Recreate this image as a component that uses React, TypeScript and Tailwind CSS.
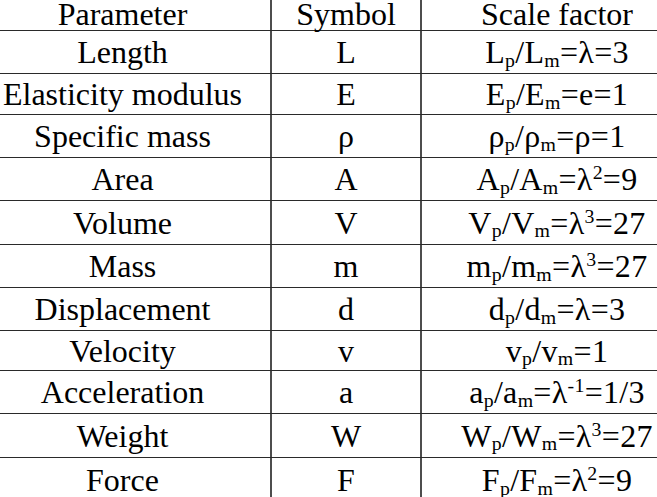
import React from "react";

const Sb = ({ c }: { c: string }) => (
  <span className="relative top-[0.2em] text-[0.62em] leading-none">{c}</span>
);
const Sp = ({ c }: { c: string }) => (
  <span className="relative top-[-0.55em] text-[0.62em] leading-none">{c}</span>
);

type Row = { p: string; s: string; f: React.ReactNode; h: string };

const rows: Row[] = [
  { p: "Length", s: "L", h: "h-[43px]", f: (<>L<Sb c="p" />/L<Sb c="m" />=λ=3</>) },
  { p: "Elasticity modulus", s: "E", h: "h-[41px]", f: (<>E<Sb c="p" />/E<Sb c="m" />=e=1</>) },
  { p: "Specific mass", s: "ρ", h: "h-[43px]", f: (<>ρ<Sb c="p" />/ρ<Sb c="m" />=ρ=1</>) },
  { p: "Area", s: "A", h: "h-[43px]", f: (<>A<Sb c="p" />/A<Sb c="m" />=λ<Sp c="2" />=9</>) },
  { p: "Volume", s: "V", h: "h-[44px]", f: (<>V<Sb c="p" />/V<Sb c="m" />=λ<Sp c="3" />=27</>) },
  { p: "Mass", s: "m", h: "h-[43px]", f: (<>m<Sb c="p" />/m<Sb c="m" />=λ<Sp c="3" />=27</>) },
  { p: "Displacement", s: "d", h: "h-[43px]", f: (<>d<Sb c="p" />/d<Sb c="m" />=λ=3</>) },
  { p: "Velocity", s: "v", h: "h-[40px]", f: (<>v<Sb c="p" />/v<Sb c="m" />=1</>) },
  { p: "Acceleration", s: "a", h: "h-[43px]", f: (<>a<Sb c="p" />/a<Sb c="m" />=λ<Sp c="-1" />=1/3</>) },
  { p: "Weight", s: "W", h: "h-[44px]", f: (<>W<Sb c="p" />/W<Sb c="m" />=λ<Sp c="3" />=27</>) },
  { p: "Force", s: "F", h: "h-[44px]", f: (<>F<Sb c="p" />/F<Sb c="m" />=λ<Sp c="2" />=9</>) },
];

function Line({
  a,
  b,
  c,
  h,
  last,
  head,
}: {
  a: React.ReactNode;
  b: React.ReactNode;
  c: React.ReactNode;
  h: string;
  last?: boolean;
  head?: boolean;
}) {
  const rowCls = `flex ${h} ${last ? "" : "border-b border-[#2a2a2a]"}`;
  const cell = `flex items-center justify-center whitespace-nowrap leading-none font-['Liberation_Serif'] ${head ? "pb-[3px]" : ""}`;
  return (
    <div className={rowCls}>
      <div className={`${cell} w-[297px] shrink-0 border-r-2 border-[#4d4d4d]`}>{a}</div>
      <div className={`${cell} w-[150px] shrink-0 border-r-2 border-[#4d4d4d]`}>{b}</div>
      <div className={`${cell} w-[270px] shrink-0`}>{c}</div>
    </div>
  );
}

export default function App() {
  return (
    <div className="w-[657px] h-[497px] overflow-hidden bg-white text-black font-['Liberation_Serif']">
      <div className="ml-[-25px] w-[717px] text-[32px]">
        <Line a="Parameter" b="Symbol" c="Scale factor" h="h-[31px]" head />
        {rows.map((r, i) => (
          <Line
            key={r.p}
            a={r.p}
            b={r.s}
            c={<span className="tracking-[0.3px]">{r.f}</span>}
            h={r.h}
            last={i === rows.length - 1}
          />
        ))}
      </div>
    </div>
  );
}
